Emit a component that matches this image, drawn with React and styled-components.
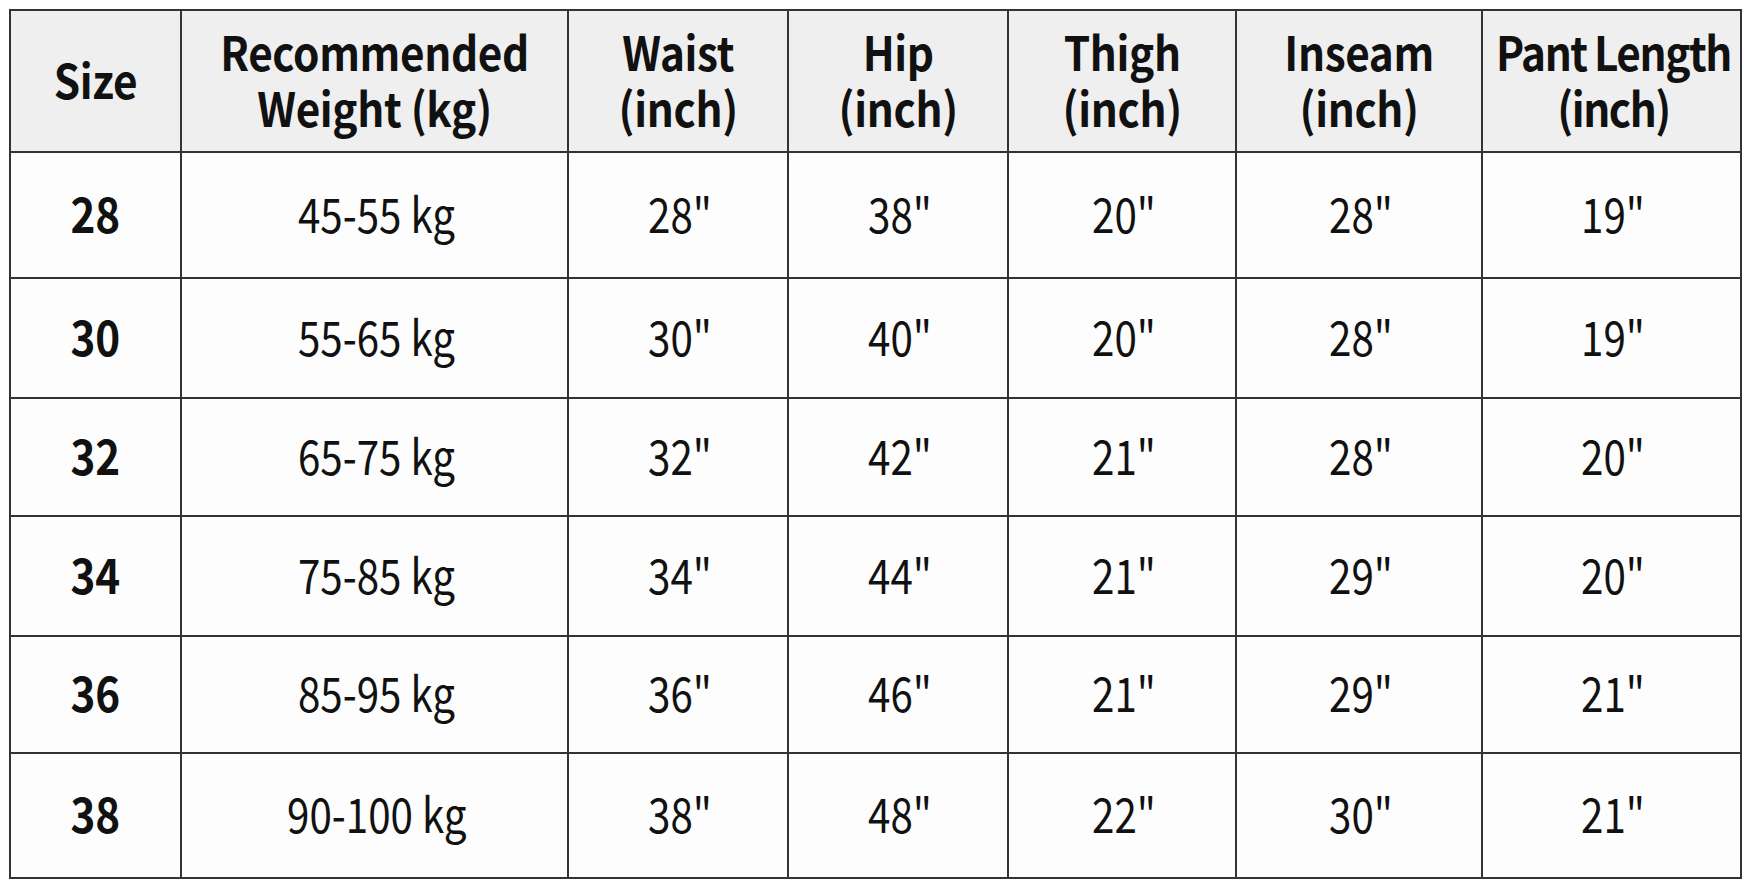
import React from "react";
import styled, { createGlobalStyle } from "styled-components";

const Global = createGlobalStyle`
  html, body { margin: 0; padding: 0; background: #ffffff; }
  body { font-family: "Noto Sans CJK SC", "Noto Sans", sans-serif; color: #111; }
`;

const Page = styled.div`
  padding: 9px 0 0 9px;
  width: 1756px;
  height: 895px;
  box-sizing: border-box;
`;

const Table = styled.table`
  border-collapse: collapse;
  width: 1731px;
  table-layout: fixed;
  background: #fdfdfd;
`;

const Head = styled.th`
  background: #efefef;
  border: 2px solid #333;
  height: 136px;
  padding: 0 0 4px 0;
  font-weight: 700;
  color: #111;
  text-align: center;
  vertical-align: middle;
`;

const HeadLabel = styled.div`
  display: inline-block;
  font-size: 47px;
  line-height: 56px;
  letter-spacing: ${(p) => (p.$tight ? "-1.6px" : "-0.4px")};
  word-spacing: ${(p) => (p.$tight ? "-1px" : "0")};
  transform: scaleX(0.9);
  white-space: nowrap;
`;

const Cell = styled.td`
  border: 2px solid #333;
  height: ${(p) => p.$h - 7}px;
  padding: 0 0 7px 0;
  color: #111;
  text-align: center;
  vertical-align: middle;
  line-height: 1;
`;

const Value = styled.span`
  display: inline-block;
  font-size: 48px;
  font-weight: ${(p) => (p.$bold ? 700 : 400)};
  transform: scaleX(${(p) => (p.$bold ? 0.88 : 0.84)});
  white-space: nowrap;
  margin-left: ${(p) => (p.$bold ? 0 : 4)}px;
`;

const cols = [171, 387, 220, 220, 228, 246, 259];

const headers = [
  ["Size"],
  ["Recommended", "Weight (kg)"],
  ["Waist", "(inch)"],
  ["Hip", "(inch)"],
  ["Thigh", "(inch)"],
  ["Inseam", "(inch)"],
  ["Pant Length", "(inch)"],
];

const rows = [
  ["28", "45-55 kg", "28\"", "38\"", "20\"", "28\"", "19\""],
  ["30", "55-65 kg", "30\"", "40\"", "20\"", "28\"", "19\""],
  ["32", "65-75 kg", "32\"", "42\"", "21\"", "28\"", "20\""],
  ["34", "75-85 kg", "34\"", "44\"", "21\"", "29\"", "20\""],
  ["36", "85-95 kg", "36\"", "46\"", "21\"", "29\"", "21\""],
  ["38", "90-100 kg", "38\"", "48\"", "22\"", "30\"", "21\""],
];

const heights = [124, 118, 116, 118, 115, 123];

export default function App() {
  return (
    <Page>
      <Global />
      <Table>
        <colgroup>
          {cols.map((w, i) => (
            <col key={i} style={{ width: w }} />
          ))}
        </colgroup>
        <thead>
          <tr>
            {headers.map((h, i) => (
              <Head key={i}>
                <HeadLabel $tight={i === 6}>
                  {h.map((line, j) => (
                    <div key={j}>{line}</div>
                  ))}
                </HeadLabel>
              </Head>
            ))}
          </tr>
        </thead>
        <tbody>
          {rows.map((r, i) => (
            <tr key={i}>
              {r.map((c, j) => (
                <Cell key={j} $h={heights[i]}>
                  <Value $bold={j === 0}>{c}</Value>
                </Cell>
              ))}
            </tr>
          ))}
        </tbody>
      </Table>
    </Page>
  );
}
